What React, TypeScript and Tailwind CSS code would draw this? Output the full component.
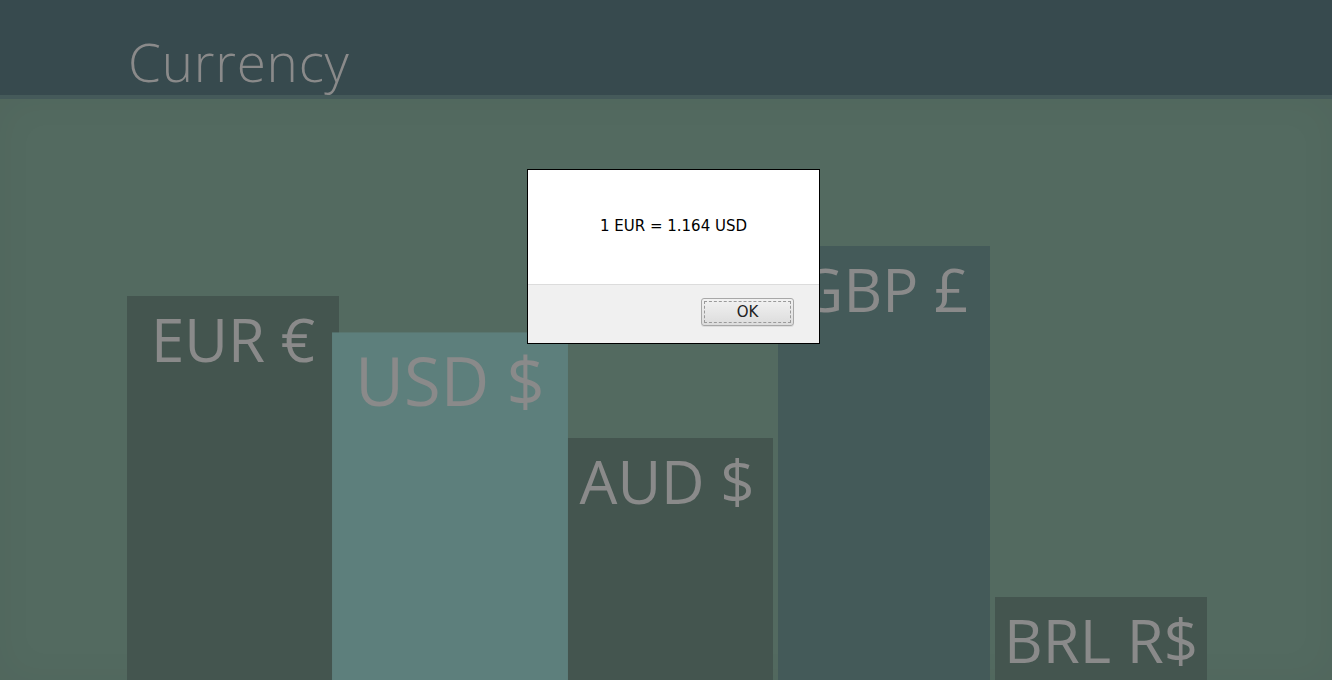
const bars = [
  { label: "EUR €", h: "h-[384px]", bg: "bg-[#44554f]", extra: "" },
  { label: "USD $", h: "h-[329px]", bg: "bg-[#5d7f7c]", extra: "scale-[1.113] z-10" },
  { label: "AUD $", h: "h-[242px]", bg: "bg-[#44554f]", extra: "" },
  { label: "GBP £", h: "h-[434px]", bg: "bg-[#445a59]", extra: "" },
  { label: "BRL R$", h: "h-[83px]", bg: "bg-[#44554f]", extra: "" },
];

const App: React.FC = () => {
  return (
    <div className="h-[680px] overflow-hidden bg-[#536a60] font-['Open_Sans',sans-serif]">
      <div className="h-[95px] bg-[#374a4e] pl-[128px] pt-[26px]">
        <span className="block text-[53px] font-light leading-[72px] tracking-[0.8px] text-[#8a8a8a]">
          Currency
        </span>
      </div>
      <div className="h-[4px] bg-[#455a5a]"></div>
      <div className="h-[581px] flex items-end gap-[5px] pl-[127px] shadow-[inset_0_0_40px_rgba(0,0,0,0.04)]">
        {bars.map((b) => (
          <div
            key={b.label}
            className={`w-[212px] shrink-0 ${b.h} ${b.bg} ${b.extra} pt-[2px] text-center text-[60px] leading-[82px] text-[#8a8a8a] whitespace-nowrap`}
          >
            {b.label}
          </div>
        ))}
      </div>

      {/* alert box */}
      <div className="fixed left-[527px] top-[169px] w-[293px] h-[175px] border border-black bg-[#f0f0f0] flex flex-col z-20 font-['DejaVu_Sans',sans-serif]">
        <div className="h-[115px] bg-white border-b border-[#dcdcdc] flex items-center justify-center pb-[2px] text-[15px] text-black">
          1 EUR = 1.164 USD
        </div>
        <div className="flex-1 flex items-start justify-end pt-[13px] pr-[25px]">
          <button className="w-[93px] h-[28px] rounded-[3px] border border-[#a8a8a8] bg-gradient-to-b from-[#f2f2f2] to-[#dcdcdc] p-[2px] shadow-[0_1px_0_rgba(0,0,0,0.08)]">
            <div className="h-full w-full border border-dashed border-[#9a9a9a] flex items-center justify-center text-[15px] leading-none text-[#222]">
              OK
            </div>
          </button>
        </div>
      </div>
    </div>
  );
};

export default App;
